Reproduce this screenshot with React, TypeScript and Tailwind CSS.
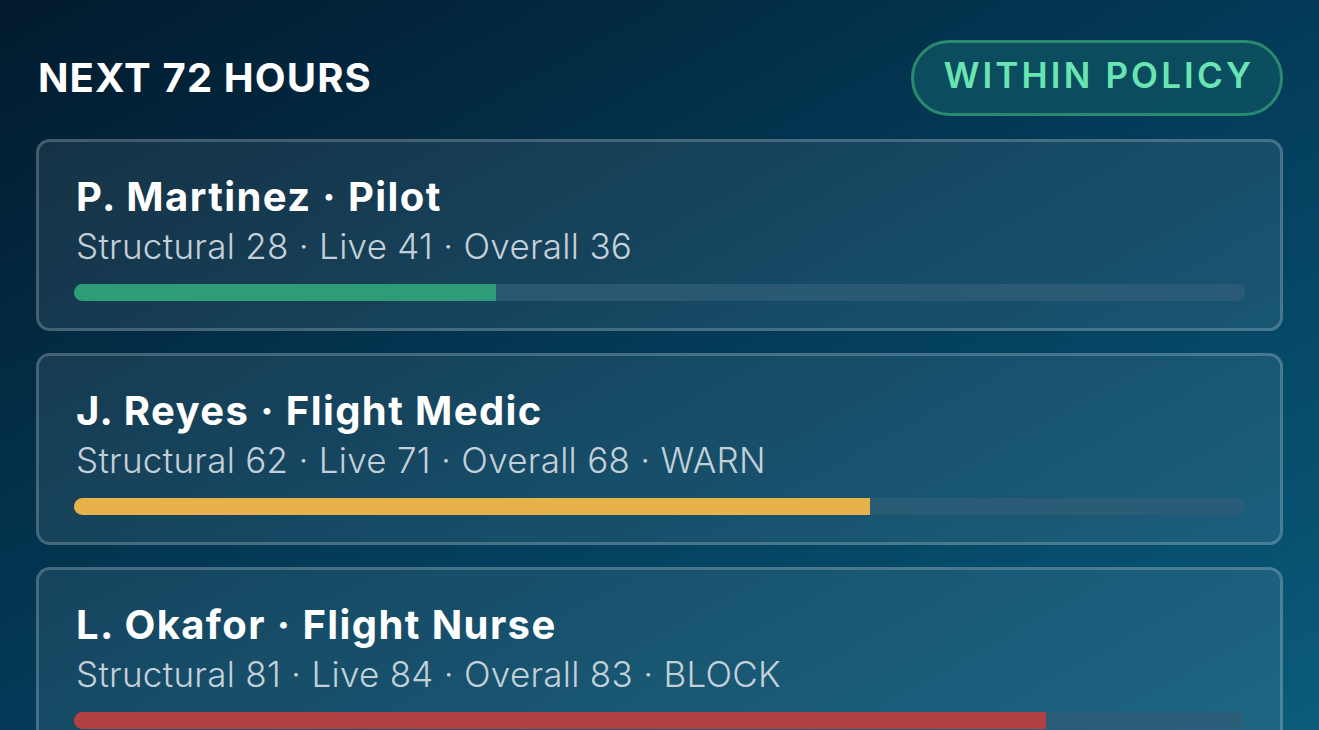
import React from 'react';

type Crew = {
  name: string;
  role: string;
  structural: number;
  live: number;
  overall: number;
  flag?: string;
  bar: string;
};

const crew: Crew[] = [
  { name: 'P. Martinez', role: 'Pilot', structural: 28, live: 41, overall: 36, bar: 'bg-[#2e9c79]' },
  { name: 'J. Reyes', role: 'Flight Medic', structural: 62, live: 71, overall: 68, flag: 'WARN', bar: 'bg-[#e8b24a]' },
  { name: 'L. Okafor', role: 'Flight Nurse', structural: 81, live: 84, overall: 83, flag: 'BLOCK', bar: 'bg-[#b34141]' },
];

const CrewCard: React.FC<{ c: Crew }> = ({ c }) => {
  const parts = [`Structural ${c.structural}`, `Live ${c.live}`, `Overall ${c.overall}`];
  if (c.flag) parts.push(c.flag);
  return (
    <div className="shrink-0 rounded-[14px] border-[3px] border-white/20 bg-white/[0.08] px-[35px] pt-[32px] pb-[27px]">
      <div className="pl-[2px] text-[40px] font-bold leading-[46px] tracking-[0.035em] text-white">
        {c.name} · {c.role}
      </div>
      <div className="mt-[4px] pl-[2px] text-[35px] font-light leading-[44px] tracking-[0.008em] text-[#c4d0d9]">
        {parts.join(' · ')}
      </div>
      <div className="mt-[16px] h-[17px] w-full overflow-hidden rounded-full bg-[#2f5d77]/80">
        <div className={`h-full ${c.bar}`} style={{ width: `${c.overall}%` }} />
      </div>
    </div>
  );
};

export default function App() {
  return (
    <div
      className="h-[730px] w-[1319px] overflow-hidden bg-gradient-to-br from-[#021a2d] via-[#033b58] to-[#0b5b7b] px-[36px] pt-[40px]"
      style={{ fontFamily: 'Inter, "Noto Sans", sans-serif' }}
    >
      <div className="flex items-center justify-between pl-[2px]">
        <h2 className="text-[40px] font-bold tracking-[0.028em] text-white">NEXT 72 HOURS</h2>
        <span className="flex h-[76px] items-center rounded-full border-[3px] border-[#2a8a6e] bg-[#0e5262]/80 pl-[30px] pr-[26px] pb-[6px] text-[35px] font-semibold tracking-[0.09em] text-[#6be4b3]">
          WITHIN POLICY
        </span>
      </div>
      <div className="mt-[23px] flex flex-col gap-[22px]">
        {crew.map((c) => (
          <CrewCard key={c.name} c={c} />
        ))}
      </div>
    </div>
  );
}
